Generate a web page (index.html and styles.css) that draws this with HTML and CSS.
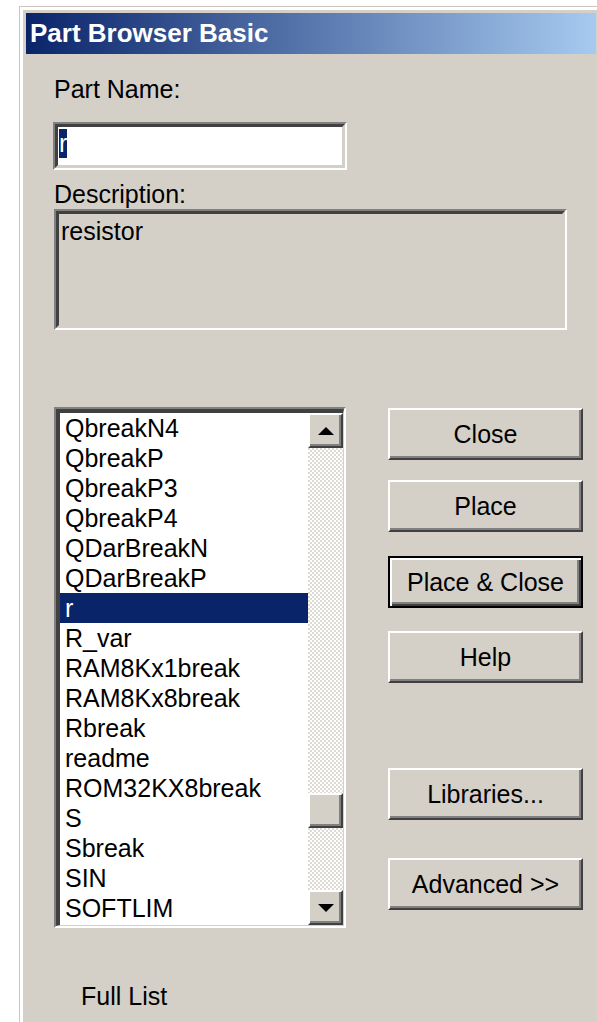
FILE: index.html
```html
<!DOCTYPE html>
<html lang="en">
<head>
<meta charset="utf-8">
<title>Part Browser Basic</title>
<link rel="stylesheet" href="styles.css">
</head>
<body>
<div class="window">
  <div class="titlebar">Part Browser Basic</div>
  <div class="client">
    <div class="label label-name">Part Name:</div>
    <div class="field sunken">
      <div class="sunken-inner field-inner"><span class="sel">r</span></div>
    </div>

    <div class="label label-desc">Description:</div>
    <div class="desc sunken">
      <div class="sunken-inner desc-inner">resistor</div>
    </div>

    <div class="browse">
      <div class="listbox sunken">
        <div class="sunken-inner list-inner">
          <ul class="items">
            <li>QbreakN4</li>
            <li>QbreakP</li>
            <li>QbreakP3</li>
            <li>QbreakP4</li>
            <li>QDarBreakN</li>
            <li>QDarBreakP</li>
            <li class="selected">r</li>
            <li>R_var</li>
            <li>RAM8Kx1break</li>
            <li>RAM8Kx8break</li>
            <li>Rbreak</li>
            <li>readme</li>
            <li>ROM32KX8break</li>
            <li>S</li>
            <li>Sbreak</li>
            <li>SIN</li>
            <li>SOFTLIM</li>
          </ul>
          <div class="vscroll">
            <div class="sb-btn raised">
              <svg width="16" height="8" viewBox="0 0 16 8"><path d="M8 0L16 8H0Z"/></svg>
            </div>
            <div class="sb-track">
              <div class="sb-thumb raised"></div>
            </div>
            <div class="sb-btn raised">
              <svg width="16" height="8" viewBox="0 0 16 8"><path d="M0 0H16L8 8Z"/></svg>
            </div>
          </div>
        </div>
      </div>

      <div class="actions">
        <button class="btn raised btn-close">Close</button>
        <button class="btn raised btn-place">Place</button>
        <button class="btn btn-default btn-place-close">Place &amp; Close</button>
        <button class="btn raised btn-help">Help</button>
        <button class="btn raised btn-libs">Libraries...</button>
        <button class="btn raised btn-adv">Advanced &gt;&gt;</button>
      </div>
    </div>

    <div class="label label-mode">Full List</div>
  </div>
</div>
</body>
</html>
```

FILE: styles.css
```css
html, body {
  margin: 0;
  padding: 0;
}

body {
  background: #fff;
  overflow: hidden;
  font-family: "Liberation Sans", Arial, sans-serif;
  font-size: 25px;
  color: #000;
}

/* dialog frame */
.window {
  margin: 6px 0 0 19px;
  height: 1016px;
  box-sizing: border-box;
  background: #d4d0c8;
  border-top: 1px solid #cbc7c0;
  border-left: 1px solid #cbc7c0;
  box-shadow: inset 3px 3px 0 #fff;
  padding: 6px 1px 0 6px;
  overflow: hidden;
}

.titlebar {
  height: 41px;
  line-height: 41px;
  padding-left: 4px;
  background: linear-gradient(90deg, #0a246a 0%, #a6caf0 100%);
  color: #fff;
  font-weight: bold;
  font-size: 26px;
  white-space: nowrap;
}

.client {
  padding-left: 28px;
}

.label {
  height: 28px;
  line-height: 28px;
  white-space: nowrap;
}

.label-name {
  margin-top: 21px;
}

.label-desc {
  margin-top: 10px;
}

.label-mode {
  margin-top: 54px;
  padding-left: 27px;
}

/* sunken 3D edges */
.sunken {
  box-sizing: border-box;
  border: 2px solid;
  border-color: #808080 #fff #fff #808080;
}

.sunken-inner {
  box-sizing: border-box;
  height: 100%;
  border: 3px solid;
  border-color: #404040 #d4d0c8 #d4d0c8 #404040;
}

/* raised 3D edges */
.raised {
  box-sizing: border-box;
  background: #d4d0c8;
  border: 2px solid;
  border-color: #fff #404040 #404040 #fff;
  box-shadow: inset -2px -2px 0 #808080;
}

/* part name edit box */
.field {
  margin-top: 19px;
  margin-left: -1px;
  width: 294px;
  height: 48px;
}

.field-inner {
  background: #fff;
  padding: 2px 0 0 1px;
}

.sel {
  display: inline-block;
  height: 29px;
  line-height: 29px;
  background: #0a246a;
  color: #fff;
}

/* description (read-only) */
.desc {
  margin-top: 1px;
  width: 513px;
  height: 121px;
}

.desc-inner {
  padding: 3px 0 0 2px;
  line-height: 28px;
}

/* list + buttons row */
.browse {
  display: flex;
  align-items: flex-start;
  margin-top: 77px;
}

.listbox {
  width: 292px;
  height: 521px;
}

.list-inner {
  display: flex;
  background: #fff;
  border-width: 4px 1px 1px 4px;
}

.items {
  flex: 1;
  margin: 0;
  padding: 0;
  list-style: none;
  overflow: hidden;
}

.items li {
  height: 30px;
  line-height: 30px;
  padding-left: 5px;
  white-space: nowrap;
}

.items li.selected {
  background: #0a246a;
  color: #fff;
}

/* vertical scrollbar */
.vscroll {
  width: 35px;
  display: flex;
  flex-direction: column;
}

.sb-btn {
  height: 35px;
  flex: none;
  display: flex;
  align-items: center;
  justify-content: center;
}

.sb-btn svg {
  fill: #000;
  display: block;
}

.sb-track {
  flex: 1;
  background: repeating-conic-gradient(#ffffff 0 25%, #dedbd5 0 50%) 0 0 / 4px 4px;
}

.sb-thumb {
  height: 35px;
  margin-top: 345px;
}

/* command buttons */
.actions {
  display: flex;
  flex-direction: column;
  width: 195px;
  margin-left: 42px;
  padding-top: 1px;
}

.btn {
  width: 195px;
  height: 52px;
  padding: 0;
  font: inherit;
  line-height: 28px;
  color: #000;
  cursor: default;
}

.btn-default {
  box-sizing: border-box;
  background: #d4d0c8;
  border: 2px solid #000;
  box-shadow: inset 2px 2px 0 #fff, inset -2px -2px 0 #404040, inset -4px -4px 0 #808080;
}

.btn-place { margin-top: 20px; }
.btn-place-close { margin-top: 24px; }
.btn-help { margin-top: 23px; }
.btn-libs { margin-top: 85px; }
.btn-adv { margin-top: 38px; }
```
